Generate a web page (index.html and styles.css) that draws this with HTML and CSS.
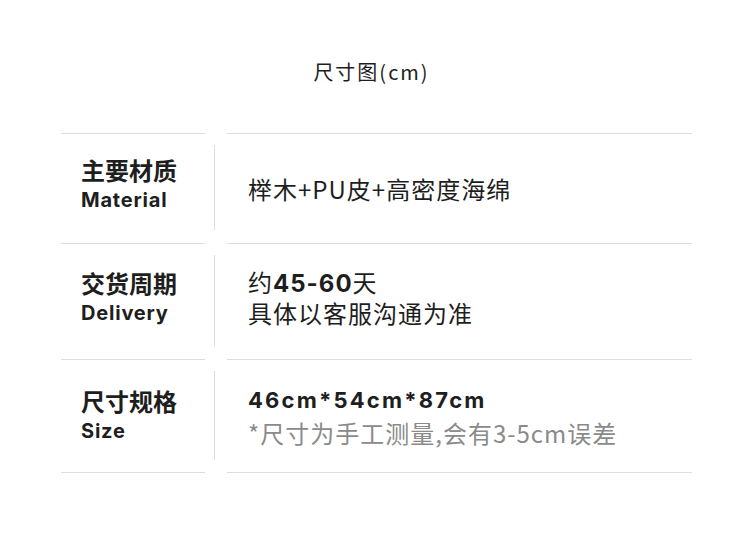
FILE: index.html
```html
<!DOCTYPE html>
<html lang="zh">
<head>
<meta charset="utf-8">
<link rel="stylesheet" href="styles.css">
</head>
<body>
<div class="page">
  <h1 class="title">尺寸图(cm)</h1>
  <div class="table">
    <div class="row row-1">
      <div class="label">
        <div class="zh">主要材质</div>
        <div class="en">Material</div>
      </div>
      <div class="sep"><span class="bar"></span></div>
      <div class="value">
        <div class="line">榉木+PU皮+高密度海绵</div>
      </div>
    </div>
    <div class="row row-2">
      <div class="label">
        <div class="zh">交货周期</div>
        <div class="en">Delivery</div>
      </div>
      <div class="sep"><span class="bar"></span></div>
      <div class="value">
        <div class="line tight">约<b class="num">45-60</b>天</div>
        <div class="line tight">具体以客服沟通为准</div>
      </div>
    </div>
    <div class="row row-3 last">
      <div class="label">
        <div class="zh">尺寸规格</div>
        <div class="en">Size</div>
      </div>
      <div class="sep"><span class="bar"></span></div>
      <div class="value">
        <div class="line dims">46cm*54cm*87cm</div>
        <div class="line note">*尺寸为手工测量,会有3-5cm误差</div>
      </div>
    </div>
  </div>
</div>
</body>
</html>
```
FILE: styles.css
```css
* { box-sizing: border-box; }
html, body { margin: 0; padding: 0; background: #fff; }
body {
  font-family: "Noto Sans CJK SC", sans-serif;
  color: #1e1e1e;
}
.page {
  width: 749px;
  height: 548px;
  padding-top: 58px;
}
.title {
  margin: 0;
  font-size: 20px;
  line-height: 28px;
  font-weight: 400;
  text-align: center;
  letter-spacing: 2px;
  padding-right: 6px;
}
.table {
  margin: 47px 0 0 61px;
  width: 631px;
}
.row {
  display: flex;
}
.row-1 { height: 110px; }
.row-2 { height: 116px; }
.row-3 { height: 114px; }
.label, .value {
  border-top: 1px solid #dedede;
  display: flex;
  flex-direction: column;
  justify-content: center;
}
.row-1 .label,
.row-2 .label { padding-bottom: 7px; }
.row-2 .value { padding-bottom: 9px; }
.last .label, .last .value { border-bottom: 1px solid #dedede; }
.label {
  width: 144px;
  padding-left: 20px;
}
.zh {
  font-size: 24px;
  line-height: 28px;
  font-weight: 700;
}
.en {
  font-family: "Inter", sans-serif;
  font-size: 20px;
  line-height: 28px;
  margin-top: 2px;
  font-weight: 700;
  letter-spacing: 0.8px;
}
.sep {
  width: 22px;
  display: flex;
  padding: 12px 0 13px 9px;
}
.bar {
  width: 1px;
  background: #dedede;
}
.value {
  flex: 1;
  padding-left: 21px;
}
.line {
  font-size: 24px;
  line-height: 30px;
  letter-spacing: 1px;
}
.line.tight { line-height: 29px; }
.num {
  font-family: "Inter", sans-serif;
  font-weight: 700;
  letter-spacing: 1px;
}
.dims {
  font-family: "Inter", sans-serif;
  font-weight: 700;
  font-size: 22px;
  letter-spacing: 2.2px;
  line-height: 30px;
  margin-top: 4px;
}
.note {
  color: #8a8a8a;
  line-height: 36px;
}
```
